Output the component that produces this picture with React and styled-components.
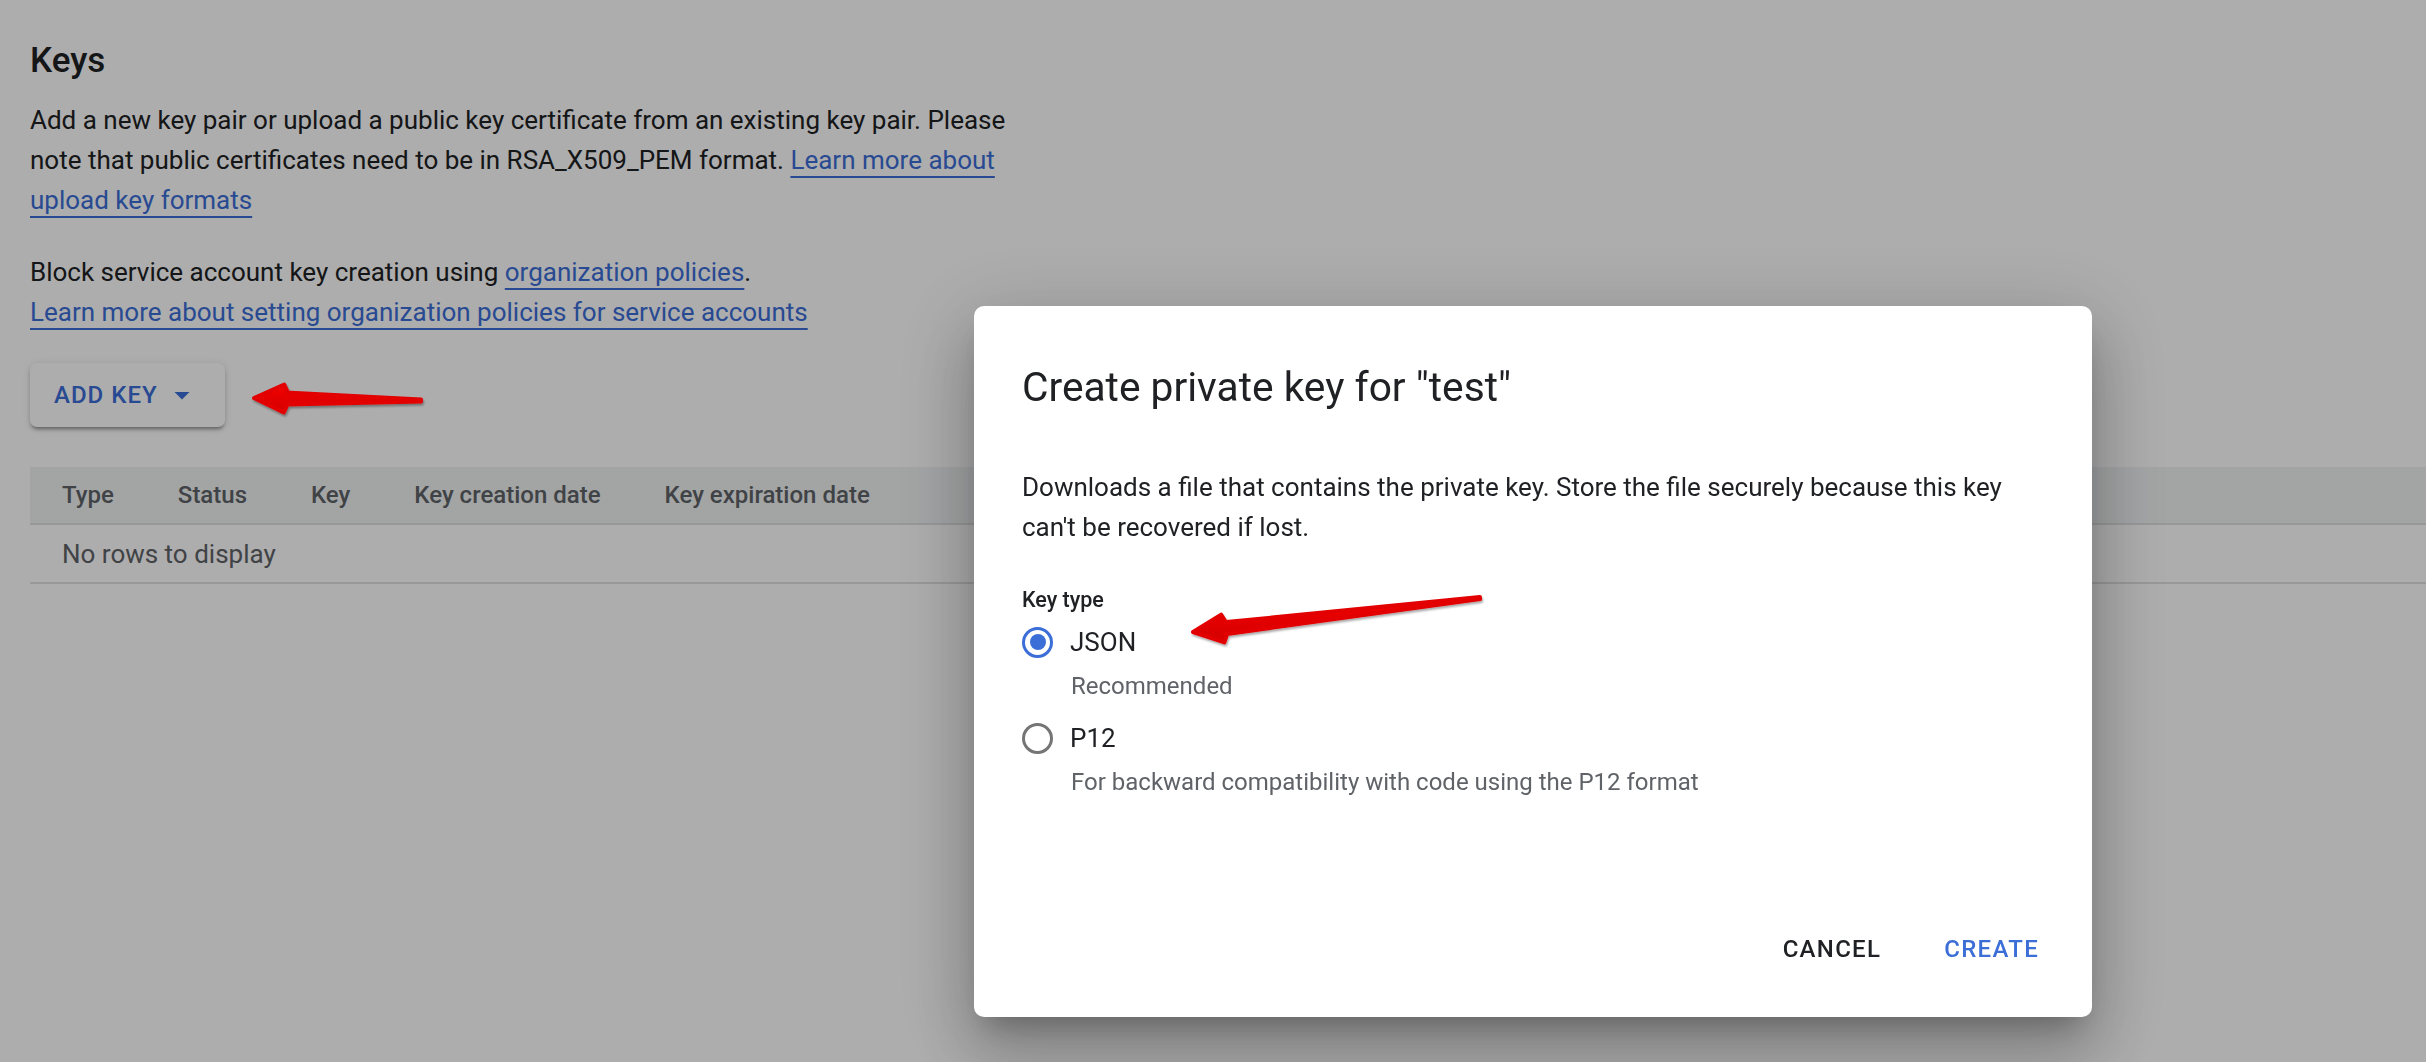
import React from 'react'
import styled, { createGlobalStyle } from 'styled-components'

const GlobalStyle = createGlobalStyle`
  html, body {
    margin: 0;
    padding: 0;
  }
  body {
    width: 2426px;
    height: 1062px;
    overflow: hidden;
    background: #ffffff;
    color: #202124;
    font-family: Roboto, 'Liberation Sans', Arial, sans-serif;
  }
`

const BLUE = '#3c6ed7'

// little helper that builds the polygon for the red annotation arrows
const arrowPoints = (tip, tail, { head = 30, half = 14, wing = 7, base = 10, end = 3 } = {}) => {
  const dx = tail[0] - tip[0]
  const dy = tail[1] - tip[1]
  const len = Math.hypot(dx, dy)
  const u = [dx / len, dy / len]
  const n = [-u[1], u[0]]
  const at = (a, b) => [tip[0] + u[0] * a + n[0] * b, tip[1] + u[1] * a + n[1] * b]
  const wl = Math.hypot(head, half)
  const ia = head + (half / wl) * wing
  const ib = half - (head / wl) * wing
  const na = ia - ((ib - base / 2) * head) / half
  const pts = [
    at(0, 0),
    at(head, -half),
    at(ia, -ib),
    at(na, -base / 2),
    at(len, -end / 2),
    at(len, end / 2),
    at(na, base / 2),
    at(ia, ib),
    at(head, half)
  ]
  return pts.map((p) => p.map((v) => v.toFixed(1)).join(',')).join(' ')
}

const App = () => {
  return (
    <>
      <GlobalStyle />
      <Page>
        <Heading>Keys</Heading>
        <Text>
          Add a new key pair or upload a public key certificate from an existing key pair. Please
          note that public certificates need to be in RSA_X509_PEM format.{' '}
          <Link href='#'>Learn more about upload key formats</Link>
        </Text>
        <Text $gap={32}>
          Block service account key creation using <Link href='#'>organization policies</Link>.
          <br />
          <Link href='#'>Learn more about setting organization policies for service accounts</Link>
        </Text>

        <AddButton>
          ADD KEY
          <svg width='36' height='36' viewBox='0 0 24 24'>
            <path d='M7 10l5 5 5-5z' fill='currentColor' />
          </svg>
        </AddButton>

        <Table>
          <HeaderRow>
            <HeadCell>Type</HeadCell>
            <HeadCell>Status</HeadCell>
            <HeadCell>Key</HeadCell>
            <HeadCell>Key creation date</HeadCell>
            <HeadCell>Key expiration date</HeadCell>
          </HeaderRow>
          <EmptyRow>No rows to display</EmptyRow>
        </Table>
      </Page>

      <Scrim>
        <Dialog>
          <DialogTitle>Create private key for "test"</DialogTitle>
          <DialogText>
            Downloads a file that contains the private key. Store the file securely because this key
            can't be recovered if lost.
          </DialogText>

          <FieldLabel>Key type</FieldLabel>
          <RadioGroup>
            <RadioOption>
              <RadioCircle $checked />
              <RadioLabel>JSON</RadioLabel>
            </RadioOption>
            <RadioHint>Recommended</RadioHint>
            <RadioOption $gap={16}>
              <RadioCircle />
              <RadioLabel>P12</RadioLabel>
            </RadioOption>
            <RadioHint>For backward compatibility with code using the P12 format</RadioHint>
          </RadioGroup>

          <Actions>
            <TextButton>CANCEL</TextButton>
            <TextButton $primary>CREATE</TextButton>
          </Actions>
        </Dialog>
      </Scrim>

      <Annotations viewBox='0 0 2426 1062'>
        <defs>
          <linearGradient id='arrowFill' x1='0' y1='0' x2='0' y2='1'>
            <stop offset='0' stopColor='#f20000' />
            <stop offset='1' stopColor='#d40000' />
          </linearGradient>
          <filter id='arrowShadow' x='-10%' y='-50%' width='120%' height='200%'>
            <feDropShadow dx='1' dy='2' stdDeviation='1.2' floodColor='#000' floodOpacity='0.35' />
          </filter>
        </defs>
        <ArrowShape points={arrowPoints([254, 398], [421, 400.5], { base: 12, end: 2, wing: 8 })} />
        <ArrowShape points={arrowPoints([1193, 632], [1480, 598], { base: 12, end: 2, wing: 8 })} />
      </Annotations>
    </>
  )
}

export default App

export const Page = styled.div`
  padding: 39px 0 0 30px;
`

export const Heading = styled.h2`
  margin: 0;
  font-size: 35px;
  line-height: 44px;
  font-weight: 500;
  color: #202124;
`

export const Text = styled.p`
  margin: ${(p) => p.$gap || 17}px 0 0;
  max-width: 1010px;
  font-size: 26px;
  line-height: 40px;
  color: #202124;
`

export const Link = styled.a`
  color: ${BLUE};
  text-decoration: underline;
  text-decoration-thickness: 2px;
  text-underline-offset: 7px;
`

export const AddButton = styled.button`
  margin-top: 31px;
  display: inline-flex;
  align-items: center;
  gap: 6px;
  height: 64px;
  padding: 0 25px 0 24px;
  border: none;
  border-radius: 7px;
  background: #ffffff;
  color: ${BLUE};
  font-family: Roboto, 'Liberation Sans', Arial, sans-serif;
  font-size: 24px;
  font-weight: 500;
  letter-spacing: 1px;
  box-shadow: 0 4px 3px -2px rgba(0, 0, 0, 0.25), 0 3px 4px 0 rgba(0, 0, 0, 0.14),
    0 1px 9px 0 rgba(0, 0, 0, 0.1);
`

export const Table = styled.div`
  margin-top: 40px;
`

export const HeaderRow = styled.div`
  display: flex;
  align-items: center;
  height: 56px;
  background: #f1f3f4;
  border-bottom: 2px solid #e0e0e0;
`

export const HeadCell = styled.div`
  padding: 0 32px;
  font-size: 24px;
  font-weight: 500;
  color: #5f6368;
  white-space: nowrap;
`

export const EmptyRow = styled.div`
  display: flex;
  align-items: center;
  height: 57px;
  padding-left: 32px;
  border-bottom: 2px solid #e0e0e0;
  font-size: 26px;
  color: #5f6368;
`

export const Scrim = styled.div`
  position: fixed;
  inset: 0;
  display: flex;
  align-items: flex-start;
  padding: 306px 0 0 974px;
  box-sizing: border-box;
  background: rgba(0, 0, 0, 0.32);
`

export const Dialog = styled.div`
  display: flex;
  flex-direction: column;
  box-sizing: border-box;
  width: 1118px;
  height: 711px;
  padding: 57px 48px 38px;
  border-radius: 10px;
  background: #ffffff;
  box-shadow: 0 18px 26px -12px rgba(0, 0, 0, 0.25), 0 40px 64px 5px rgba(0, 0, 0, 0.16),
    0 15px 78px 14px rgba(0, 0, 0, 0.14);
`

export const DialogTitle = styled.h3`
  margin: 0;
  font-size: 40.7px;
  line-height: 48px;
  font-weight: 400;
  color: #202124;
`

export const DialogText = styled.p`
  margin: 56px 0 0;
  font-size: 26px;
  line-height: 40px;
  color: #202124;
`

export const FieldLabel = styled.div`
  margin-top: 39px;
  font-size: 21.5px;
  line-height: 28px;
  font-weight: 500;
  color: #202124;
`

export const RadioGroup = styled.div`
  display: flex;
  flex-direction: column;
  margin-top: 8px;
`

export const RadioOption = styled.label`
  display: flex;
  align-items: center;
  height: 40px;
  margin-top: ${(p) => p.$gap || 0}px;
`

export const RadioCircle = styled.span`
  position: relative;
  flex: none;
  box-sizing: border-box;
  width: 31px;
  height: 31px;
  border-radius: 50%;
  border: 3px solid ${(p) => (p.$checked ? BLUE : '#757575')};

  &::after {
    content: '';
    display: ${(p) => (p.$checked ? 'block' : 'none')};
    position: absolute;
    left: 4.5px;
    top: 4.5px;
    width: 16px;
    height: 16px;
    border-radius: 50%;
    background: ${BLUE};
  }
`

export const RadioLabel = styled.span`
  margin-left: 17px;
  font-size: 26px;
  line-height: 40px;
  color: #202124;
`

export const RadioHint = styled.div`
  margin-top: 8px;
  padding-left: 49px;
  font-size: 24px;
  line-height: 32px;
  color: #5f6368;
`

export const Actions = styled.div`
  display: flex;
  justify-content: flex-end;
  gap: 31px;
  margin: auto -11px 0 0;
`

export const TextButton = styled.button`
  height: 60px;
  padding: 0 16px;
  border: none;
  background: transparent;
  color: ${(p) => (p.$primary ? BLUE : '#202124')};
  font-family: Roboto, 'Liberation Sans', Arial, sans-serif;
  font-size: 24px;
  font-weight: 500;
  letter-spacing: 1.3px;
`

export const Annotations = styled.svg`
  position: fixed;
  inset: 0;
  width: 2426px;
  height: 1062px;
  pointer-events: none;
`

export const ArrowShape = styled.polygon.attrs({ filter: 'url(#arrowShadow)' })`
  fill: url(#arrowFill);
  stroke: #e20000;
  stroke-width: 4;
  stroke-linejoin: round;
`
